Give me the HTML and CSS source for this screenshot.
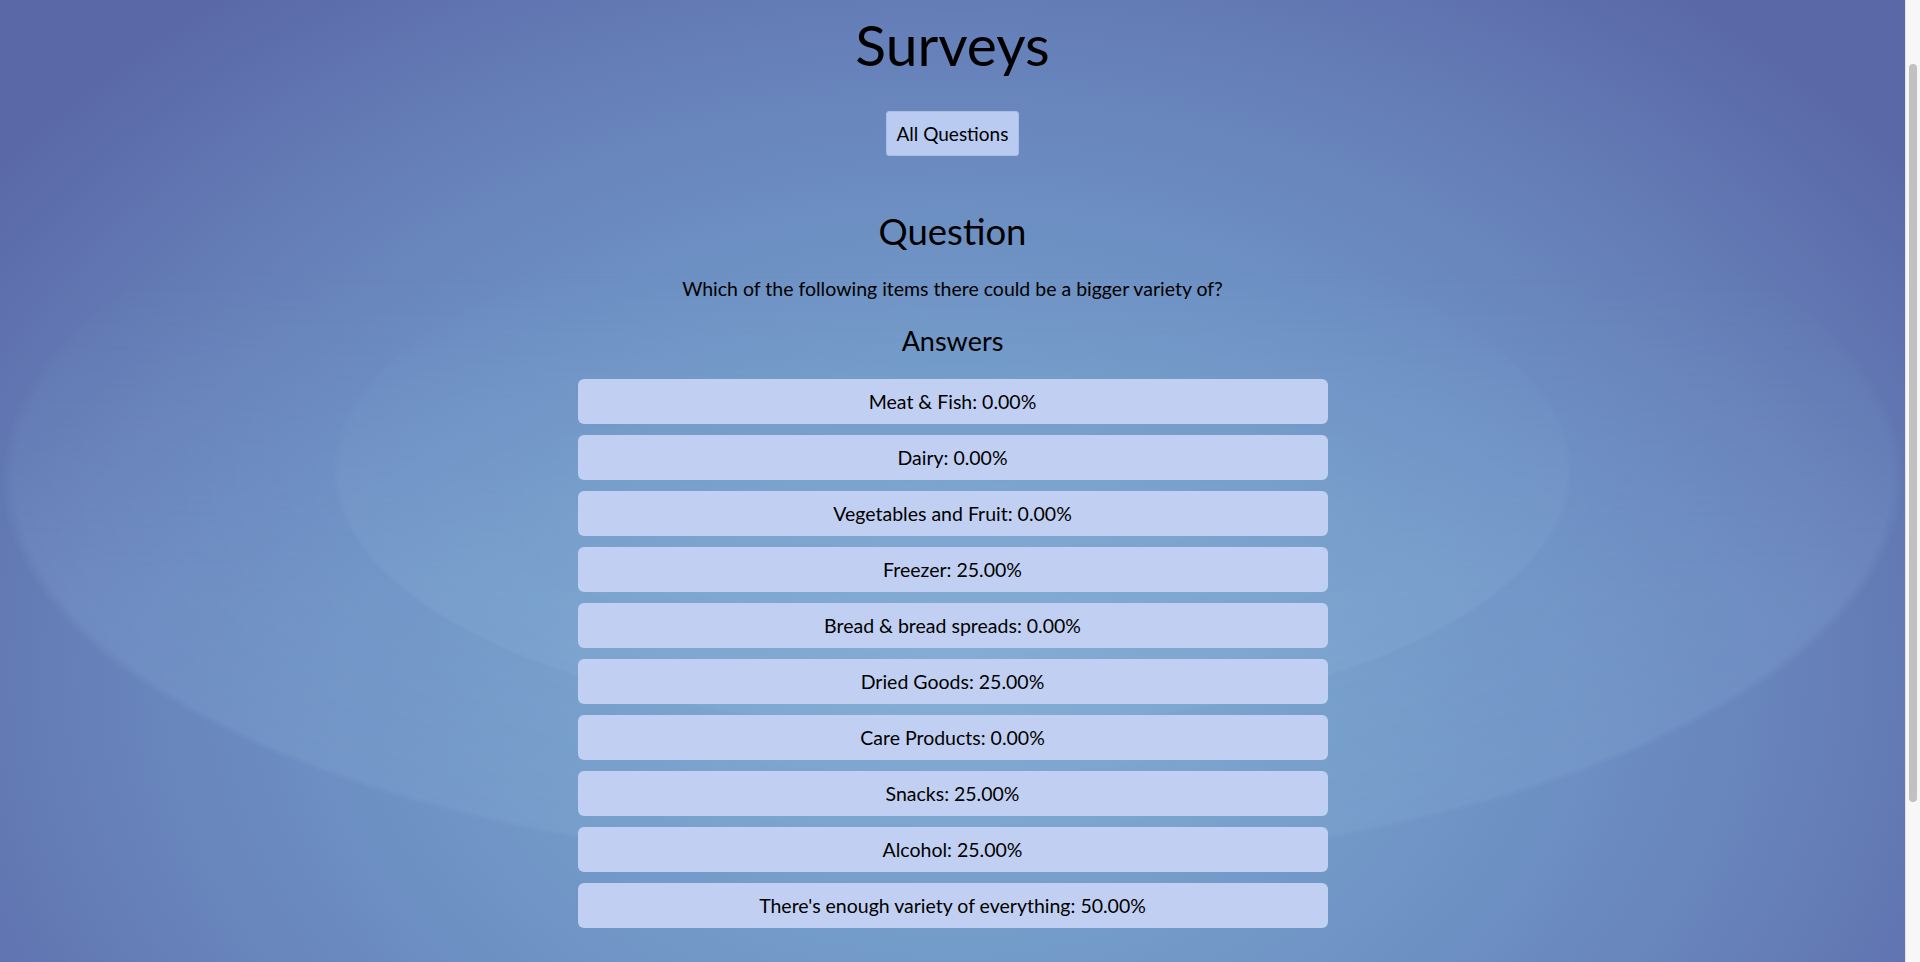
FILE: index.html
```html
<!DOCTYPE html>
<html lang="en">
<head>
<meta charset="utf-8">
<title>Surveys</title>
<link rel="stylesheet" href="styles.css">
</head>
<body>
<div class="app">
  <main class="main">
    <div class="page">
      <h1 class="title">Surveys</h1>
      <div class="nav">
        <button class="nav-btn" type="button">All Questions</button>
      </div>
      <h2 class="q-title">Question</h2>
      <p class="q-text">Which of the following items there could be a bigger variety of?</p>
      <h3 class="a-title">Answers</h3>
      <ul class="answers">
        <li class="answer">Meat &amp; Fish: 0.00%</li>
        <li class="answer">Dairy: 0.00%</li>
        <li class="answer">Vegetables and Fruit: 0.00%</li>
        <li class="answer">Freezer: 25.00%</li>
        <li class="answer">Bread &amp; bread spreads: 0.00%</li>
        <li class="answer">Dried Goods: 25.00%</li>
        <li class="answer">Care Products: 0.00%</li>
        <li class="answer">Snacks: 25.00%</li>
        <li class="answer">Alcohol: 25.00%</li>
        <li class="answer">There's enough variety of everything: 50.00%</li>
      </ul>
    </div>
  </main>
  <div class="scrollbar" aria-hidden="true">
    <div class="scrollbar-thumb"></div>
  </div>
</div>
</body>
</html>
```
FILE: styles.css
```css
html, body {
  margin: 0;
  height: 100%;
}
body {
  font-family: Lato, "Noto Sans", sans-serif;
  color: #000;
  overflow: hidden;
}
.app {
  display: flex;
  height: 100vh;
}
.main {
  position: relative;
  flex: 1;
  overflow: hidden;
  background-color: #5b6aa9;
  background-image:
    radial-gradient(ellipse 1180px 860px at 50% 70%, #80a9d2 0%, #769fcb 26%, #6d90c3 52%, #6680b9 74%, #5a68a8 100%);
}
.main::before {
  content: "";
  position: absolute;
  inset: 0;
  background-image:
    radial-gradient(ellipse 620px 260px at 50% 470px, rgba(150, 190, 225, 0.14) 0%, rgba(150, 190, 225, 0.14) 99%, rgba(150, 190, 225, 0) 100%),
    radial-gradient(ellipse 952px 394px at 50% 478px, rgba(140, 178, 218, 0.08) 0%, rgba(140, 178, 218, 0.22) 98.5%, rgba(140, 178, 218, 0) 100%);
  -webkit-mask-image: linear-gradient(to bottom, transparent 28%, #000 62%);
  mask-image: linear-gradient(to bottom, transparent 28%, #000 62%);
}
.page {
  position: relative;
  padding-top: 8px;
  text-align: center;
}
.scrollbar {
  width: 14px;
  flex: none;
  background: #f7f7f7;
  border-left: 1px solid #e4e4e4;
  padding-top: 64px;
}
.scrollbar-thumb {
  width: 8px;
  height: 738px;
  margin-left: 3px;
  border-radius: 4px;
  background: #c1c1c1;
}
.title {
  margin: 0;
  font-size: 57px;
  line-height: 72px;
  font-weight: 400;
}
.nav {
  margin-top: 31px;
  display: flex;
  justify-content: center;
}
.nav-btn {
  height: 45px;
  padding: 0 10px;
  border: 1px solid #a9bde6;
  border-radius: 3px;
  background: #b9cbf1;
  font-family: inherit;
  font-size: 19px;
  line-height: 43px;
  color: #000;
}
.q-title {
  margin: 54px 0 0;
  font-size: 36.5px;
  line-height: 43px;
  font-weight: 400;
}
.q-text {
  margin: 25px 0 0;
  font-size: 19.5px;
  line-height: 22px;
}
.a-title {
  margin: 25px 0 0;
  font-size: 27px;
  line-height: 32px;
  font-weight: 400;
}
.answers {
  list-style: none;
  margin: 22px auto 0;
  padding: 0;
  width: 750px;
  display: flex;
  flex-direction: column;
  gap: 11px;
}
.answer {
  height: 45px;
  line-height: 46px;
  border-radius: 6px;
  background: #c1d0f2;
  font-size: 19.5px;
}
```
